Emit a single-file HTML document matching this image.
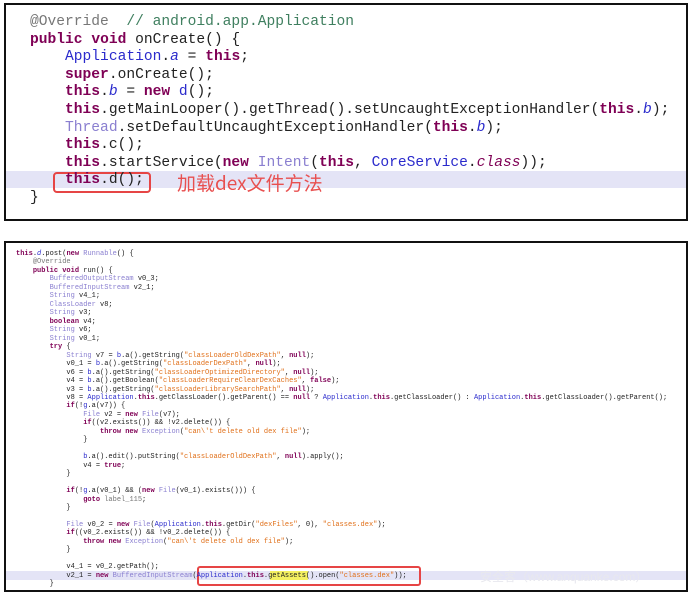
<!DOCTYPE html>
<html><head><meta charset="utf-8"><style>
body{margin:0;width:692px;height:596px;background:#fff;position:relative;overflow:hidden}
.box{position:absolute;border:2px solid #111;box-sizing:border-box;left:4px;width:684px}
pre{margin:0;position:absolute;font-family:"Liberation Mono",monospace;white-space:pre}
.k{color:#7f0055;font-weight:bold}
.t{color:#8a7fd0}
.f{color:#2a2acc}
.i{font-style:italic}
.s{color:#e0701a}
.c{color:#3f7f5f}
.a{color:#777}
.hl{position:absolute;left:6px;width:680px;background:#e4e4f6}
#top pre{left:30px;top:14px;font-size:14.6px;line-height:17.6px;color:#222}
#bot pre{left:16px;top:250px;font-size:7px;line-height:8.47px;color:#222}
</style></head><body>
<div class="box" style="top:3px;height:218px"></div>
<div class="hl" style="top:171px;height:17px"></div>
<div style="position:absolute;left:53px;top:172px;width:94px;height:17px;border:2px solid #e64545;border-radius:4px"></div>
<div style="position:absolute;left:177px;top:172px;font:19px 'Noto Sans CJK SC',sans-serif;color:#e85050;line-height:22px">加载dex文件方法</div>
<div id="top"><pre><span class="a">@Override</span>  <span class="c">// android.app.Application</span>
<span class="k">public</span> <span class="k">void</span> onCreate() {
    <span class="f">Application</span>.<span class="f i">a</span> = <span class="k">this</span>;
    <span class="k">super</span>.onCreate();
    <span class="k">this</span>.<span class="f i">b</span> = <span class="k">new</span> <span class="f">d</span>();
    <span class="k">this</span>.getMainLooper().getThread().setUncaughtExceptionHandler(<span class="k">this</span>.<span class="f i">b</span>);
    <span class="t">Thread</span>.setDefaultUncaughtExceptionHandler(<span class="k">this</span>.<span class="f i">b</span>);
    <span class="k">this</span>.c();
    <span class="k">this</span>.startService(<span class="k">new</span> <span class="t">Intent</span>(<span class="k">this</span>, <span class="f">CoreService</span>.<span class="i" style="color:#7f0055">class</span>));
    <span class="k">this</span>.d();
}</pre></div>

<div class="box" style="top:241px;height:351px"></div>
<div class="hl" style="top:571px;height:9px"></div>
<div style="position:absolute;left:197px;top:566px;width:220px;height:16px;border:2px solid #e64545;border-radius:3px"></div>
<div style="position:absolute;left:270px;top:571px;width:38px;height:9px;background:#f4f060"></div>
<div style="position:absolute;left:480px;top:568px;font:12px 'Liberation Sans','Noto Sans CJK SC',sans-serif;color:#e8e8ee">安全客（www.anquanke.com）</div>
<div id="bot"><pre><span class="k">this</span>.<span class="f i">d</span>.post(<span class="k">new</span> <span class="t">Runnable</span>() {
    <span class="a">@Override</span>
    <span class="k">public</span> <span class="k">void</span> run() {
        <span class="t">BufferedOutputStream</span> v0_3;
        <span class="t">BufferedInputStream</span> v2_1;
        <span class="t">String</span> v4_1;
        <span class="t">ClassLoader</span> v8;
        <span class="t">String</span> v3;
        <span class="k">boolean</span> v4;
        <span class="t">String</span> v6;
        <span class="t">String</span> v0_1;
        <span class="k">try</span> {
            <span class="t">String</span> v7 = <span class="f">b</span>.a().getString(<span class="s">"classLoaderOldDexPath"</span>, <span class="k">null</span>);
            v0_1 = <span class="f">b</span>.a().getString(<span class="s">"classLoaderDexPath"</span>, <span class="k">null</span>);
            v6 = <span class="f">b</span>.a().getString(<span class="s">"classLoaderOptimizedDirectory"</span>, <span class="k">null</span>);
            v4 = <span class="f">b</span>.a().getBoolean(<span class="s">"classLoaderRequireClearDexCaches"</span>, <span class="k">false</span>);
            v3 = <span class="f">b</span>.a().getString(<span class="s">"classLoaderLibrarySearchPath"</span>, <span class="k">null</span>);
            v8 = <span class="f">Application</span>.<span class="k">this</span>.getClassLoader().getParent() == <span class="k">null</span> ? <span class="f">Application</span>.<span class="k">this</span>.getClassLoader() : <span class="f">Application</span>.<span class="k">this</span>.getClassLoader().getParent();
            <span class="k">if</span>(!<span class="f">g</span>.a(v7)) {
                <span class="t">File</span> v2 = <span class="k">new</span> <span class="t">File</span>(v7);
                <span class="k">if</span>((v2.exists()) &amp;&amp; !v2.delete()) {
                    <span class="k">throw</span> <span class="k">new</span> <span class="t">Exception</span>(<span class="s">"can\'t delete old dex file"</span>);
                }

                <span class="f">b</span>.a().edit().putString(<span class="s">"classLoaderOldDexPath"</span>, <span class="k">null</span>).apply();
                v4 = <span class="k">true</span>;
            }

            <span class="k">if</span>(!<span class="f">g</span>.a(v0_1) &amp;&amp; (<span class="k">new</span> <span class="t">File</span>(v0_1).exists())) {
                <span class="k">goto</span> <span class="a">label_115</span>;
            }

            <span class="t">File</span> v0_2 = <span class="k">new</span> <span class="t">File</span>(<span class="f">Application</span>.<span class="k">this</span>.getDir(<span class="s">"dexFiles"</span>, 0), <span class="s">"classes.dex"</span>);
            <span class="k">if</span>((v0_2.exists()) &amp;&amp; !v0_2.delete()) {
                <span class="k">throw</span> <span class="k">new</span> <span class="t">Exception</span>(<span class="s">"can\'t delete old dex file"</span>);
            }

            v4_1 = v0_2.getPath();
            v2_1 = <span class="k">new</span> <span class="t">BufferedInputStream</span>(<span class="f">Application</span>.<span class="k">this</span>.getAssets().open(<span class="s">"classes.dex"</span>));
        }</pre></div>
</body></html>
